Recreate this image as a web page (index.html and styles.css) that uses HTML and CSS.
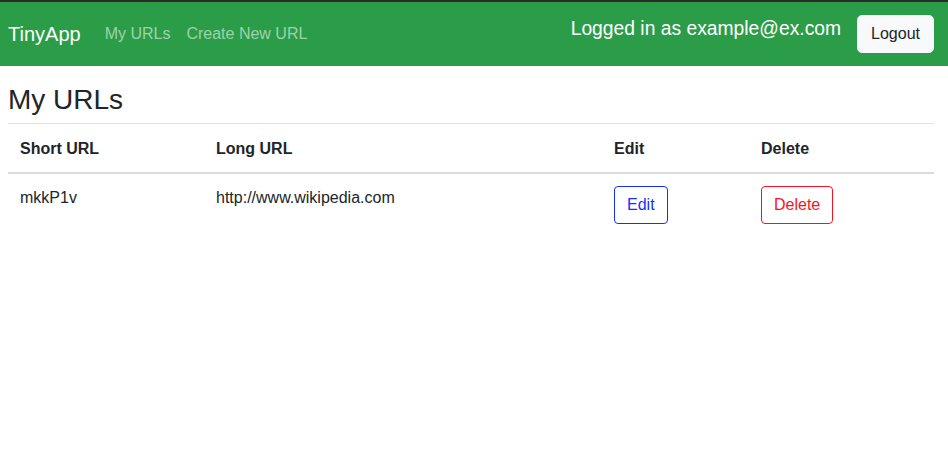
FILE: index.html
```html
<!DOCTYPE html>
<html lang="en">
<head>
    <meta charset="UTF-8">
    <meta name="viewport" content="width=device-width, initial-scale=1.0">
    <title>TinyApp</title>
    <link rel="stylesheet" href="styles.css">
</head>
<body>
    <nav class="navbar">
        <a class="brand" href="#">TinyApp</a>
        <a class="nav-link" href="#">My URLs</a>
        <a class="nav-link" href="#">Create New URL</a>
        <div class="nav-right">
            <h5 class="user">Logged in as example@ex.com</h5>
            <button class="btn btn-light">Logout</button>
        </div>
    </nav>

    <main class="content">
        <h1>My URLs</h1>
        <table class="table">
            <thead>
                <tr>
                    <th class="col-short">Short URL</th>
                    <th class="col-long">Long URL</th>
                    <th class="col-edit">Edit</th>
                    <th>Delete</th>
                </tr>
            </thead>
            <tbody>
                <tr>
                    <td>mkkP1v</td>
                    <td>http://www.wikipedia.com</td>
                    <td><button class="btn btn-edit">Edit</button></td>
                    <td><button class="btn btn-delete">Delete</button></td>
                </tr>
            </tbody>
        </table>
    </main>
</body>
</html>
```

FILE: styles.css
```css
body {
    margin: 0;
    font-family: "Liberation Sans", Arial, sans-serif;
    font-size: 16px;
    color: #212529;
    background-color: white;
    border-top: 2px solid #2b2b2b;
}
.navbar {
    display: flex;
    align-items: center;
    height: 64px;
    padding: 0 14px 0 8px;
    background-color: #2b9d48;
}
.brand {
    margin-right: 16px;
    font-size: 20px;
    line-height: 30px;
    color: white;
    text-decoration: none;
}
.nav-link {
    padding: 8px;
    line-height: 24px;
    color: rgba(255,255,255,0.55);
    text-decoration: none;
}
.nav-right {
    display: flex;
    align-items: center;
    margin-left: auto;
}
.user {
    margin: 0 16px 10px 0;
    font-size: 19.3px;
    font-weight: normal;
    line-height: 1.2;
    color: white;
}
.btn {
    padding: 6px 12px;
    font-family: inherit;
    font-size: 16px;
    line-height: 24px;
    border: 1px solid transparent;
    border-radius: 5px;
    background: none;
    cursor: pointer;
}
.btn-light {
    padding: 6px 13px;
    background-color: #f8f9fa;
    border-color: #f8f9fa;
    color: #212529;
}
.btn-edit {
    color: #1430ff;
    border-color: #1430ff;
    border-radius: 4px;
}
.btn-delete {
    color: #ff1020;
    border-color: #ff1020;
    border-radius: 4px;
}
.content {
    padding: 0 14px 0 8px;
}
h1 {
    margin: 17px 0 6px;
    font-size: 28px;
    font-weight: normal;
    line-height: 1.2;
}
.table {
    width: 100%;
    border-collapse: collapse;
    border-top: 1px solid #dee2e6;
}
.table th,
.table td {
    padding: 12px;
    line-height: 24px;
    text-align: left;
    vertical-align: top;
}
.table th {
    padding: 13px 12px 11px;
    font-weight: bold;
}
.table thead tr {
    border-bottom: 2px solid #d9dcdf;
}
.col-short {
    width: 172px;
}
.col-long {
    width: 374px;
}
.col-edit {
    width: 123px;
}
```
